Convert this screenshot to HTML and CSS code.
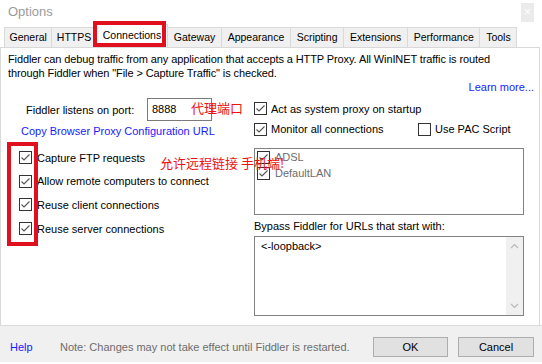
FILE: index.html
```html
<!DOCTYPE html>
<html lang="en">
<head>
    <meta charset="UTF-8">
    <title>Options</title>
    <link rel="stylesheet" href="styles.css">
</head>
<body>
    <div class="window">
        <header class="titlebar">
            <span class="title">Options</span>
            <span class="close">&#215;</span>
        </header>

        <nav class="tabs">
            <span class="tab">General</span>
            <span class="tab">HTTPS</span>
            <span class="tab active">Connections</span>
            <span class="tab">Gateway</span>
            <span class="tab">Appearance</span>
            <span class="tab">Scripting</span>
            <span class="tab">Extensions</span>
            <span class="tab">Performance</span>
            <span class="tab">Tools</span>
        </nav>

        <section class="page">
            <p class="intro">Fiddler can debug traffic from any application that accepts a HTTP Proxy. All WinINET traffic is routed<br>through Fiddler when "File &gt; Capture Traffic" is checked.</p>
            <div class="more"><a class="link">Learn more...</a></div>

            <div class="cols">
                <div class="col-left">
                    <div class="port-row">
                        <label>Fiddler listens on port:</label>
                        <span class="input">8888</span>
                    </div>
                    <a class="link copy-link">Copy Browser Proxy Configuration URL</a>

                    <!-- remote / reuse options -->
                    <ul class="checks">
                        <li><svg class="cb" viewBox="0 0 13 13"><rect x=".5" y=".5" width="12" height="12"/><polyline points="2.5,6.5 5,9 10.5,3.5"/></svg>Capture FTP requests</li>
                        <li><svg class="cb" viewBox="0 0 13 13"><rect x=".5" y=".5" width="12" height="12"/><polyline points="2.5,6.5 5,9 10.5,3.5"/></svg>Allow remote computers to connect</li>
                        <li><svg class="cb" viewBox="0 0 13 13"><rect x=".5" y=".5" width="12" height="12"/><polyline points="2.5,6.5 5,9 10.5,3.5"/></svg>Reuse client connections</li>
                        <li><svg class="cb" viewBox="0 0 13 13"><rect x=".5" y=".5" width="12" height="12"/><polyline points="2.5,6.5 5,9 10.5,3.5"/></svg>Reuse server connections</li>
                    </ul>
                </div>

                <div class="col-right">
                    <div class="check-row row-first">
                        <svg class="cb" viewBox="0 0 13 13"><rect x=".5" y=".5" width="12" height="12"/><polyline points="2.5,6.5 5,9 10.5,3.5"/></svg>
                        <span>Act as system proxy on startup</span>
                    </div>
                    <div class="check-row">
                        <svg class="cb" viewBox="0 0 13 13"><rect x=".5" y=".5" width="12" height="12"/><polyline points="2.5,6.5 5,9 10.5,3.5"/></svg>
                        <span class="monitor">Monitor all connections</span>
                        <svg class="cb" viewBox="0 0 13 13"><rect x=".5" y=".5" width="12" height="12"/></svg>
                        <span>Use PAC Script</span>
                    </div>

                    <div class="listbox">
                        <div class="item"><svg class="cb" viewBox="0 0 13 13"><rect x=".5" y=".5" width="12" height="12"/><polyline points="2.5,6.5 5,9 10.5,3.5"/></svg>ADSL</div>
                        <div class="item"><svg class="cb" viewBox="0 0 13 13"><rect x=".5" y=".5" width="12" height="12"/><polyline points="2.5,6.5 5,9 10.5,3.5"/></svg>DefaultLAN</div>
                    </div>

                    <div class="bypass-label">Bypass Fiddler for URLs that start with:</div>
                    <div class="textarea">
                        <div class="text">&lt;-loopback&gt;</div>
                        <div class="vscroll">
                            <svg viewBox="0 0 9 6"><polyline points="1,5 4.5,1.5 8,5"/></svg>
                            <svg viewBox="0 0 9 6"><polyline points="1,1 4.5,4.5 8,1"/></svg>
                        </div>
                    </div>
                </div>
            </div>
        </section>

        <footer class="footer">
            <a class="link help">Help</a>
            <span class="note">Note: Changes may not take effect until Fiddler is restarted.</span>
            <button class="btn">OK</button>
            <button class="btn">Cancel</button>
        </footer>

        <!-- red annotations drawn over the dialog -->
        <div class="mark mark-tab"></div>
        <div class="mark mark-checks"></div>
        <span class="memo memo-port">代理端口</span>
        <span class="memo memo-remote">允许远程链接 手机端!</span>
    </div>
</body>
</html>
```

FILE: styles.css
```css
body {
    margin: 0;
    background: #fff;
    font-family: "Liberation Sans", Arial, sans-serif;
    font-size: 11px;
    color: #000;
}

.window {
    position: relative;
    width: 542px;
    height: 364px;
    display: flex;
    flex-direction: column;
    overflow: hidden;
}

.titlebar {
    height: 27px;
    display: flex;
    justify-content: space-between;
    align-items: flex-start;
}

.title {
    margin: 4px 0 0 8px;
    font-size: 13px;
    color: #9b9b9b;
}

.close {
    width: 13px;
    height: 19px;
    margin: 3px 8px 0 0;
    background: #ebebeb;
    color: #fff;
    font-size: 12px;
    line-height: 18px;
    text-align: center;
}

.tabs {
    display: flex;
    align-items: flex-end;
    height: 20px;
    padding-left: 4px;
    font-size: 10.5px;
}

.tab {
    height: 19px;
    line-height: 19px;
    padding: 0 4.5px;
    margin-right: -1px;
    border: 1px solid #d9d9d9;
    border-bottom: none;
    background: #f0f0f0;
}

.tab.active {
    height: 22px;
    line-height: 20px;
    padding: 0 6px;
    background: #fff;
}

.tab.active ~ .tab {
    padding: 0 5.7px;
}

.page {
    width: 540px;
    height: 278px;
    box-sizing: border-box;
    border: 1px solid #d9d9d9;
    border-bottom: none;
}

.intro {
    margin: 4px 0 0 7px;
    line-height: 14px;
    letter-spacing: -0.1px;
}

.link {
    color: #1a1aff;
}

.more {
    line-height: 14px;
    text-align: right;
    padding-right: 5px;
}

.cols {
    display: flex;
    margin-top: 4px;
}

.col-left {
    width: 253px;
}

.port-row {
    display: flex;
    align-items: center;
    height: 23px;
    padding-left: 25px;
}

.port-row label {
    width: 121px;
}

.input {
    width: 65px;
    height: 23px;
    box-sizing: border-box;
    border: 1px solid #7a7a7a;
    padding-left: 4px;
    line-height: 21px;
}

.copy-link {
    display: block;
    margin-top: 4px;
    padding-left: 20px;
    line-height: 13px;
}

.checks {
    list-style: none;
    margin: 8px 0 0;
    padding: 0 0 0 18px;
}

.checks li {
    display: flex;
    align-items: center;
    gap: 5px;
    height: 23.6px;
}

.cb {
    width: 13px;
    height: 13px;
    flex: none;
}

.cb rect {
    fill: #fff;
    stroke: #333;
}

.cb polyline {
    fill: none;
    stroke: #555;
    stroke-width: 1.1;
}

.col-right {
    width: 270px;
}

.check-row {
    display: flex;
    align-items: center;
    gap: 4px;
    height: 20px;
}

.row-first {
    height: 21px;
}

.monitor {
    width: 143px;
}

.listbox {
    margin-top: 9px;
    width: 270px;
    height: 67px;
    box-sizing: border-box;
    border: 1px solid #828282;
    padding-left: 2px;
}

.item {
    display: flex;
    align-items: center;
    gap: 5px;
    height: 16px;
    color: #6d6d6d;
}

.bypass-label {
    margin-top: 4px;
    line-height: 14px;
}

.textarea {
    display: flex;
    margin-top: 3px;
    width: 270px;
    height: 80px;
    box-sizing: border-box;
    border: 1px solid #828282;
}

.textarea .text {
    flex: 1;
    padding: 2px 0 0 6px;
    line-height: 14px;
}

.vscroll {
    width: 17px;
    background: #f0f0f0;
    display: flex;
    flex-direction: column;
    justify-content: space-between;
    align-items: center;
    padding: 6px 0;
}

.vscroll svg {
    width: 9px;
    height: 6px;
}

.vscroll polyline {
    fill: none;
    stroke: #b8b8b8;
    stroke-width: 1.2;
}

.footer {
    display: flex;
    align-items: center;
    height: 37px;
    box-sizing: border-box;
    padding: 11px 8px 6px 10px;
    border-top: 1px solid #dadada;
    background: #f0f0f0;
}

.help {
    width: 50px;
}

.note {
    flex: 1;
    color: #6d6d6d;
}

.btn {
    width: 75px;
    height: 20px;
    padding: 0;
    border: 1px solid #adadad;
    background: #e1e1e1;
    font-family: inherit;
    font-size: 11px;
    color: #000;
}

.btn + .btn {
    width: 76px;
    margin-left: 10px;
}

.mark {
    position: absolute;
    box-sizing: border-box;
    border: 4px solid #e0101e;
}

.mark-tab {
    left: 93px;
    top: 21px;
    width: 73px;
    height: 26px;
}

.mark-checks {
    left: 7px;
    top: 142px;
    width: 31px;
    height: 104px;
}

.memo {
    position: absolute;
    font-family: "Noto Sans CJK SC", sans-serif;
    font-size: 13px;
    line-height: 16px;
    color: #ee1111;
    white-space: nowrap;
}

.memo-port {
    left: 191px;
    top: 100px;
}

.memo-remote {
    left: 160px;
    top: 155px;
}
```
